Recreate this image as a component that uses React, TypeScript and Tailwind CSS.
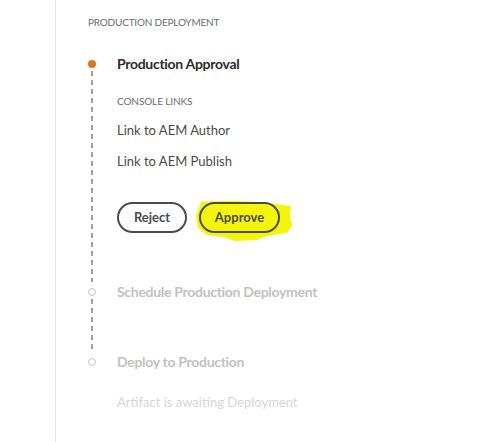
import React from "react";

const font = { fontFamily: "Lato, 'Noto Sans', sans-serif" };

function Dot({ active }: { active?: boolean }) {
  if (active) return <span className="mt-[6px] block h-[8px] w-[8px] shrink-0 rounded-full bg-[#d97a1c]" />;
  return <span className="mt-[6px] block h-[8px] w-[8px] shrink-0 rounded-full border-[1.5px] border-[#c6c6c6] bg-white" />;
}

function Rail() {
  return (
    <span className="mt-[3px] block w-[2px] flex-1 bg-[repeating-linear-gradient(to_bottom,#a0a0a0_0px,#a0a0a0_5px,transparent_5px,transparent_9px)]" />
  );
}

function Step({
  active,
  last,
  children,
  className,
}: {
  active?: boolean;
  last?: boolean;
  children: React.ReactNode;
  className?: string;
}) {
  return (
    <div className="flex">
      <div className="flex w-[8px] flex-col items-center">
        <Dot active={active} />
        {!last && <Rail />}
      </div>
      <div className={"ml-[21px] flex flex-col " + (className || "")}>{children}</div>
    </div>
  );
}

export default function App() {
  return (
    <div className="h-[442px] w-[500px] overflow-hidden bg-white" style={font}>
      <div className="ml-[55px] h-full border-l border-[#e6e6e6] pl-[32px] pt-[14px]">
        <p className="text-[10px] leading-4 tracking-[-0.2px] text-[#6e6e6e]">PRODUCTION DEPLOYMENT</p>

        <div className="mt-[24px]">
          <Step active className="pb-[49px]">
            <h2 className="text-[14px] font-bold leading-5 tracking-[-0.3px] text-[#2c2c2c]">Production Approval</h2>
            <p className="mt-[19px] text-[10px] leading-4 tracking-[-0.1px] text-[#6e6e6e]">CONSOLE LINKS</p>
            <a className="mt-[11px] text-[13px] leading-5 text-[#4b4b4b]">Link to AEM Author</a>
            <a className="mt-[11px] text-[13px] leading-5 text-[#4b4b4b]">Link to AEM Publish</a>
            <div className="mt-[31px] flex gap-[12px]">
              <button className="h-[31px] w-[70px] rounded-full border-2 border-[#4b4b4b] text-[13px] font-bold text-[#4b4b4b]">
                Reject
              </button>
              <div className="relative">
                <svg
                  className="absolute left-[-4px] top-[-2px]"
                  width="100"
                  height="42"
                  viewBox="0 0 100 42"
                >
                  <path
                    d="M6 2 C30 0 60 1 80 4 L96 6 L95 16 L97 26 L92 33 L72 36 L62 40 L40 41 L28 37 L12 35 L3 28 L1 16 Z"
                    fill="#f5f50a"
                  />
                </svg>
                <button className="relative h-[31px] w-[81px] rounded-full border-2 border-[#4b4b4b] text-[13px] font-bold text-[#4b4b4b]">
                  Approve
                </button>
              </div>
            </div>
          </Step>

          <Step className="pb-[50px]">
            <h2 className="text-[14px] font-bold leading-5 tracking-[-0.3px] text-[#c2c2c2]">Schedule Production Deployment</h2>
          </Step>

          <Step last>
            <h2 className="text-[14px] font-bold leading-5 tracking-[-0.3px] text-[#c2c2c2]">Deploy to Production</h2>
            <p className="mt-[20px] text-[13px] leading-5 text-[#d6d6d6]">Artifact is awaiting Deployment</p>
          </Step>
        </div>
      </div>
    </div>
  );
}
